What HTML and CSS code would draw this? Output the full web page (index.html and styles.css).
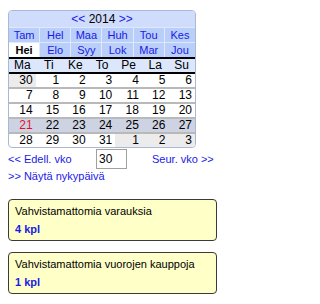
FILE: index.html
```html
<!DOCTYPE html>
<html>
<head>
<meta charset="utf-8">
<link rel="stylesheet" href="styles.css">
</head>
<body>
<div class="cal">
  <div class="year"><a class="lnk">&lt;&lt;</a> 2014 <a class="lnk">&gt;&gt;</a></div>
  <div class="months">
    <span class="m">Tam</span><span class="m">Hel</span><span class="m">Maa</span><span class="m">Huh</span><span class="m">Tou</span><span class="m">Kes</span>
    <span class="m sel">Hei</span><span class="m">Elo</span><span class="m">Syy</span><span class="m">Lok</span><span class="m">Mar</span><span class="m">Jou</span>
  </div>
  <div class="dows">
    <span>Ma</span><span>Ti</span><span>Ke</span><span>To</span><span>Pe</span><span>La</span><span>Su</span>
  </div>
  <div class="dates">
    <div class="wk"><span class="o">30</span><span>1</span><span>2</span><span>3</span><span>4</span><span>5</span><span>6</span></div>
    <div class="wk"><span>7</span><span>8</span><span>9</span><span>10</span><span>11</span><span>12</span><span>13</span></div>
    <div class="wk"><span>14</span><span>15</span><span>16</span><span>17</span><span>18</span><span>19</span><span>20</span></div>
    <div class="wk cur"><span class="today">21</span><span>22</span><span>23</span><span>24</span><span>25</span><span>26</span><span>27</span></div>
    <div class="wk last"><span>28</span><span>29</span><span>30</span><span>31</span><span class="o">1</span><span class="o">2</span><span class="o">3</span></div>
  </div>
</div>
<div class="nav">
  <a class="lnk prev">&lt;&lt; Edell. vko</a>
  <input class="wkin" type="text" value="30">
  <a class="lnk next">Seur. vko &gt;&gt;</a>
</div>
<div class="now"><a class="lnk">&gt;&gt; Näytä nykypäivä</a></div>
<div class="box">
  <div class="title">Vahvistamattomia varauksia</div>
  <div class="count">4 kpl</div>
</div>
<div class="box">
  <div class="title">Vahvistamattomia vuorojen kauppoja</div>
  <div class="count">1 kpl</div>
</div>
</body>
</html>
```
FILE: styles.css
```css
body {
  margin: 10px 8px;
  font-family: "Liberation Sans", Arial, sans-serif;
  font-size: 11px;
  color: #000;
  background: #fff;
}
.lnk {
  color: #1a1ae6;
  text-decoration: none;
}
.cal {
  width: 186px;
  border: 1px solid #a9b9d3;
  border-radius: 4px;
  overflow: hidden;
  background: #fff;
}
.year {
  height: 16px;
  line-height: 16px;
  text-align: center;
  background: #cfdcfb;
  font-size: 12px;
}
.months {
  display: grid;
  grid-template-columns: repeat(6, 1fr);
  gap: 1px;
  background: #dfe8fc;
  border-top: 1px solid #dfe8fc;
}
.m {
  height: 14px;
  line-height: 14px;
  text-align: center;
  background: #b9cef9;
  color: #1a1ae6;
  font-size: 11px;
}
.m.sel {
  background: #fff;
  color: #000;
  font-weight: bold;
}
.dows {
  display: grid;
  grid-template-columns: repeat(7, 1fr);
  border-top: 2px solid #000;
  border-bottom: 2px solid #000;
  background: #dde7fb;
}
.dows span {
  height: 13px;
  line-height: 13px;
  text-align: center;
  font-size: 12px;
}
.wk {
  display: grid;
  grid-template-columns: repeat(7, 1fr);
  border-bottom: 2px solid #b9b9b9;
}
.wk.last {
  border-bottom: 0;
}
.wk span {
  height: 13px;
  line-height: 13px;
  text-align: right;
  padding-right: 3px;
  font-size: 12px;
}
.wk span.o {
  background: #ececec;
}
.wk.cur {
  background: #cdd3e2;
}
.wk span.today {
  color: #e8102a;
}
.nav {
  display: flex;
  align-items: center;
  height: 21px;
}
.prev {
  width: 88px;
}
.wkin {
  width: 25px;
  height: 16px;
  padding: 1px 2px;
  margin: 0;
  border: 1px solid #a0a0a0;
  font-family: "Liberation Sans", Arial, sans-serif;
  font-size: 12px;
}
.next {
  margin-left: 25px;
}
.now {
  height: 15px;
  line-height: 15px;
  margin-bottom: 15px;
}
.box {
  width: 195px;
  border: 1px solid #3a3a3a;
  border-radius: 4px;
  background: #ffffc8;
  padding: 5px 6px 4px;
  margin-bottom: 11px;
}
.title {
  height: 13px;
  line-height: 13px;
  margin-bottom: 5px;
}
.count {
  height: 13px;
  line-height: 13px;
  font-weight: bold;
  color: #1a1ae6;
}
```
